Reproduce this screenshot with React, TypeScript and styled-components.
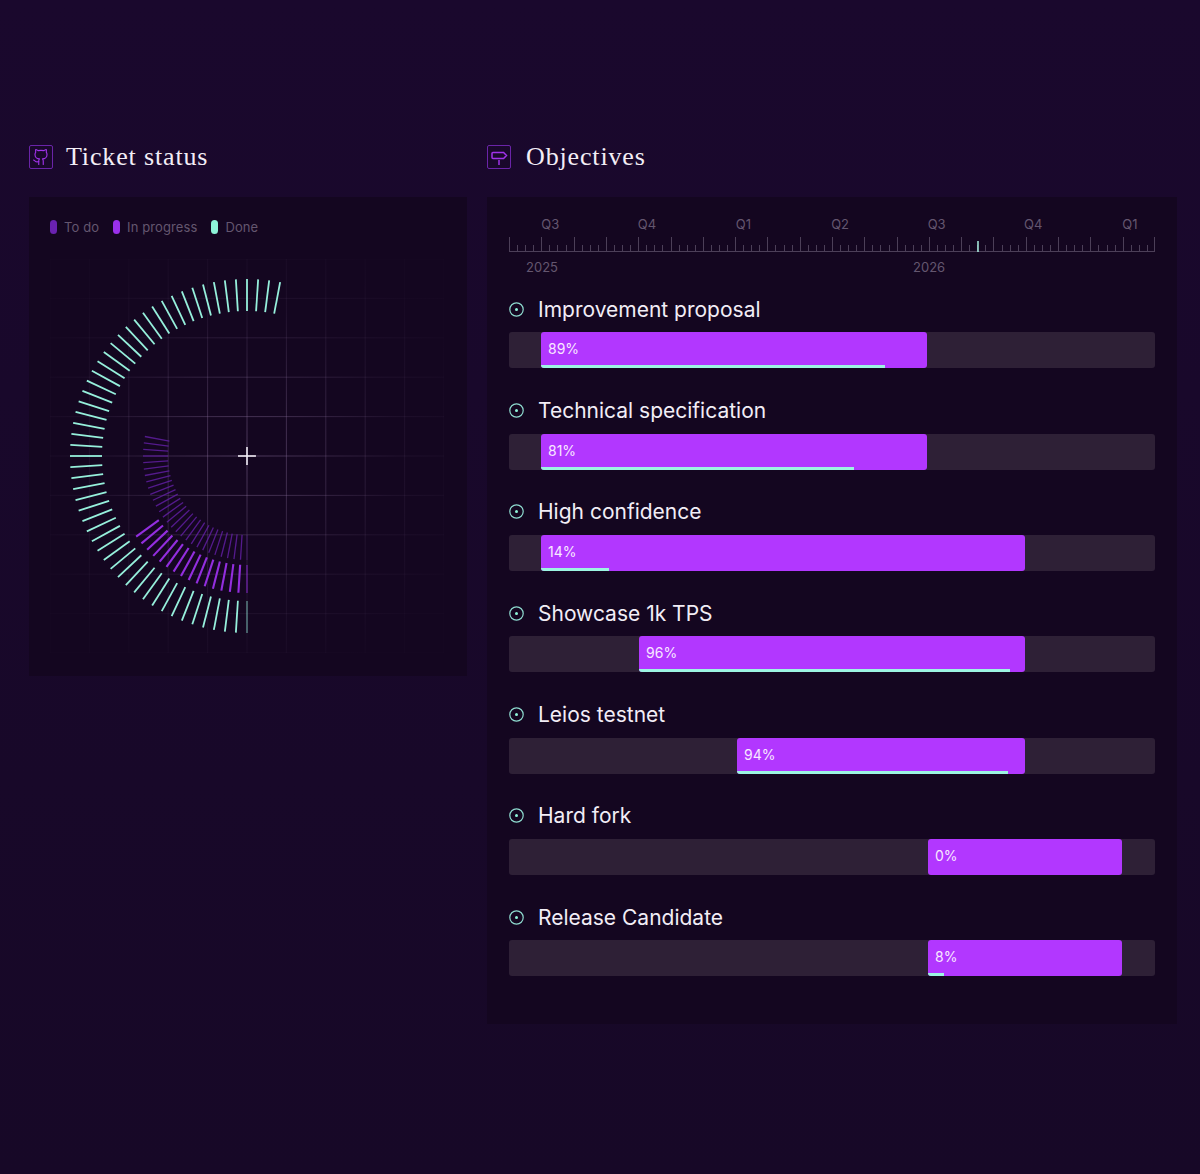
import styled, { createGlobalStyle } from "styled-components";
import { Github } from "lucide-react";

const GlobalStyle = createGlobalStyle`
  html, body {
    margin: 0;
    background: #1a082d;
  }
  * {
    box-sizing: border-box;
  }
`;

const Page = styled.main`
  display: grid;
  grid-template-columns: 438px 690px;
  column-gap: 20px;
  align-items: start;
  width: 1200px;
  min-height: 1174px;
  padding: 145px 0 0 29px;
  font-family: "Inter", "Liberation Sans", sans-serif;
  background: linear-gradient(180deg, #1a082d 0%, #170827 100%);
`;

const Column = styled.section`
  display: flex;
  flex-direction: column;
  gap: 28px;
`;

const SectionHeader = styled.header<{ $gap: number }>`
  display: flex;
  align-items: center;
  gap: ${({ $gap }) => $gap}px;
  height: 24px;
`;

const IconBox = styled.span`
  display: flex;
  align-items: center;
  justify-content: center;
  width: 24px;
  height: 24px;
  border: 1px solid #6a24a8;
  border-radius: 2px;
  color: #a032ea;
`;

const Title = styled.h2`
  margin: 0;
  font-family: "Liberation Serif", serif;
  font-size: 26px;
  font-weight: 400;
  letter-spacing: 0.85px;
  color: #f3eef6;
`;

const Panel = styled.div`
  background: #140620;
`;

const TicketPanel = styled(Panel)`
  display: flex;
  flex-direction: column;
  gap: 25px;
  padding: 23px 21px;
`;

const Legend = styled.ul`
  display: flex;
  align-items: center;
  gap: 14px;
  height: 14px;
  margin: 0;
  padding: 0;
  list-style: none;
`;

const LegendItem = styled.li`
  display: flex;
  align-items: center;
  gap: 7px;
  font-size: 13px;
  letter-spacing: 0.1px;
  color: #64566f;
`;

const Pill = styled.span<{ $color: string }>`
  width: 7px;
  height: 14px;
  border-radius: 4px;
  background: ${({ $color }) => $color};
`;

const ChartSvg = styled.svg`
  display: block;
  width: 394px;
  height: 394px;
`;

const ObjectivesPanel = styled(Panel)`
  padding: 20px 22px 48px;
`;

const Quarters = styled.div`
  display: grid;
  grid-template-columns: repeat(7, 96.6px);
  margin-left: -7px;
  height: 14px;
`;

const AxisLabel = styled.span`
  font-size: 13px;
  line-height: 14px;
  text-align: center;
  color: #64566f;
`;

const RulerSvg = styled.svg`
  display: block;
  width: 646px;
  height: 16px;
  margin-top: 5px;
`;

const Years = styled.div`
  display: grid;
  grid-template-columns: 387px 1fr;
  height: 14px;
  margin-top: 8px;
  padding-left: 17px;
`;

const YearLabel = styled(AxisLabel)`
  text-align: left;
`;

const Rows = styled.div`
  display: flex;
  flex-direction: column;
  gap: 28.33px;
  margin-top: 21.2px;
`;

const Row = styled.article`
  display: flex;
  flex-direction: column;
  gap: 9px;
`;

const RowTitle = styled.h3`
  display: flex;
  align-items: center;
  gap: 14px;
  height: 28px;
  margin: 0;
  font-size: 21px;
  font-weight: 400;
  color: #f2edf6;
`;

const Track = styled.div`
  display: flex;
  height: 36px;
  border-radius: 3px;
  background: #2e2036;
`;

const Fill = styled.div<{ $start: number; $span: number }>`
  position: relative;
  display: flex;
  align-items: center;
  margin-left: ${({ $start }) => $start}px;
  width: ${({ $span }) => $span}px;
  padding: 0 0 3px 7px;
  overflow: hidden;
  border-radius: 3px;
  background: #b237ff;
  font-size: 14px;
  color: #f8e8ff;
`;

const Progress = styled.span<{ $pct: number }>`
  position: absolute;
  left: 0;
  bottom: 0;
  width: ${({ $pct }) => $pct}%;
  height: 3px;
  background: #9cf5e2;
`;

const GithubIcon = styled(Github)`
  width: 18px;
  height: 18px;
`;

const SignpostIcon = () => (
  <svg width="18" height="18" viewBox="0 0 18 18" fill="none" stroke="currentColor" strokeWidth="1.5">
    <path d="M9 12v5" />
    <path d="M2 5.5a1 1 0 0 1 1-1h10.6l2.9 3-2.9 3H3a1 1 0 0 1-1-1z" />
  </svg>
);

const TargetIcon = () => (
  <svg width="15" height="15" viewBox="0 0 15 15" fill="none">
    <circle cx="7.5" cy="7.5" r="6.7" stroke="#8fdcd0" strokeWidth="1.2" />
    <circle cx="7.5" cy="7.5" r="1.5" fill="#8df3d8" />
  </svg>
);

const CENTER = 197;
const GRID_STEP = 39.4;
const TICK_ANGLE = 3.6;

const rings = [
  { count: 29, inner: 79, outer: 104, color: "#6a22b0", width: 1.3, opacity: 0.75 },
  { count: 16, inner: 109, outer: 137, color: "#9a30ea", width: 2.1, opacity: 0.95 },
  { count: 54, inner: 145, outer: 177, color: "#96f0dc", width: 1.8, opacity: 1 },
];

const gridOffsets = Array.from({ length: 11 }, (_, i) => (i - 5) * GRID_STEP);

const TicketChart = () => (
  <ChartSvg viewBox="0 0 394 394">
    <defs>
      <radialGradient id="gridFade" gradientUnits="userSpaceOnUse" cx={CENTER} cy={CENTER} r={230}>
        <stop offset="0%" stopColor="#8a6f9c" stopOpacity="0.5" />
        <stop offset="35%" stopColor="#8a6f9c" stopOpacity="0.28" />
        <stop offset="65%" stopColor="#8a6f9c" stopOpacity="0.1" />
        <stop offset="100%" stopColor="#8a6f9c" stopOpacity="0.02" />
      </radialGradient>
    </defs>
    {gridOffsets.map(offset => (
      <g key={offset} stroke="url(#gridFade)" strokeWidth="1">
        <line x1={CENTER + offset} y1="0" x2={CENTER + offset} y2="394" />
        <line x1="0" y1={CENTER + offset} x2="394" y2={CENTER + offset} />
      </g>
    ))}
    {rings.map(ring =>
      Array.from({ length: ring.count }, (_, i) => {
        const rad = (i * TICK_ANGLE * Math.PI) / 180;
        const dx = -Math.sin(rad);
        const dy = Math.cos(rad);
        return (
          <line
            key={`${ring.outer}-${i}`}
            x1={CENTER + dx * ring.inner}
            y1={CENTER + dy * ring.inner}
            x2={CENTER + dx * ring.outer}
            y2={CENTER + dy * ring.outer}
            stroke={ring.color}
            strokeWidth={i === 0 ? ring.width * 0.7 : ring.width}
            strokeOpacity={i === 0 ? ring.opacity * 0.6 : ring.opacity}
          />
        );
      }),
    )}
    <g stroke="#f2edf6" strokeWidth="1.6">
      <line x1={CENTER - 9} y1={CENTER} x2={CENTER + 9} y2={CENTER} />
      <line x1={CENTER} y1={CENTER - 9} x2={CENTER} y2={CENTER + 9} />
    </g>
  </ChartSvg>
);

const MONTH = 646 / 20;

const Ruler = () => (
  <RulerSvg viewBox="0 0 646 16">
    <line x1="0" y1="15.5" x2="646" y2="15.5" stroke="#4c3f58" />
    {Array.from({ length: 81 }, (_, i) => {
      const x = Math.min(Math.round((i * MONTH) / 4) + 0.5, 645.5);
      return <line key={i} x1={x} y1={i % 4 === 0 ? 1 : 9} x2={x} y2="15" stroke="#4c3f58" />;
    })}
    <line x1="469" y1="5" x2="469" y2="16" stroke="#a8f0e0" strokeWidth="1.5" />
  </RulerSvg>
);

const objectives = [
  { name: "Improvement proposal", pct: 89, start: 32, span: 386 },
  { name: "Technical specification", pct: 81, start: 32, span: 386 },
  { name: "High confidence", pct: 14, start: 32, span: 484 },
  { name: "Showcase 1k TPS", pct: 96, start: 130, span: 386 },
  { name: "Leios testnet", pct: 94, start: 228, span: 288 },
  { name: "Hard fork", pct: 0, start: 419, span: 194 },
  { name: "Release Candidate", pct: 8, start: 419, span: 194 },
];

const quarters = ["Q3", "Q4", "Q1", "Q2", "Q3", "Q4", "Q1"];

const App = () => (
  <>
    <GlobalStyle />
    <Page>
      <Column>
        <SectionHeader $gap={13}>
          <IconBox>
            <GithubIcon strokeWidth={1.5} />
          </IconBox>
          <Title>Ticket status</Title>
        </SectionHeader>
        <TicketPanel>
          <Legend>
            <LegendItem>
              <Pill $color="#6a22b0" />
              To do
            </LegendItem>
            <LegendItem>
              <Pill $color="#9a30ea" />
              In progress
            </LegendItem>
            <LegendItem>
              <Pill $color="#8df3d8" />
              Done
            </LegendItem>
          </Legend>
          <TicketChart />
        </TicketPanel>
      </Column>
      <Column>
        <SectionHeader $gap={15}>
          <IconBox>
            <SignpostIcon />
          </IconBox>
          <Title>Objectives</Title>
        </SectionHeader>
        <ObjectivesPanel>
          <Quarters>
            {quarters.map((q, i) => (
              <AxisLabel key={i}>{q}</AxisLabel>
            ))}
          </Quarters>
          <Ruler />
          <Years>
            <YearLabel>2025</YearLabel>
            <YearLabel>2026</YearLabel>
          </Years>
          <Rows>
            {objectives.map(o => (
              <Row key={o.name}>
                <RowTitle>
                  <TargetIcon />
                  {o.name}
                </RowTitle>
                <Track>
                  <Fill $start={o.start} $span={o.span}>
                    {o.pct}%
                    <Progress $pct={o.pct} />
                  </Fill>
                </Track>
              </Row>
            ))}
          </Rows>
        </ObjectivesPanel>
      </Column>
    </Page>
  </>
);

export default App;
